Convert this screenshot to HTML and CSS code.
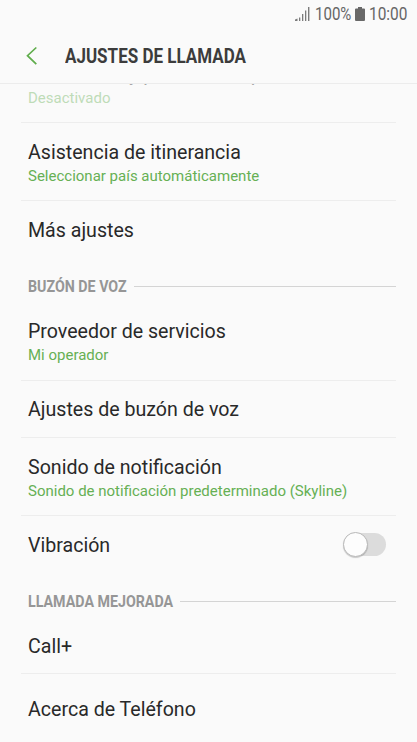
FILE: index.html
```
<!DOCTYPE html>
<html lang="es">
<head>
    <meta charset="UTF-8">
    <title>Ajustes de llamada</title>
    <link rel="stylesheet" href="styles.css">
</head>
<body>
    <div class="status">
        <svg class="signal" width="15" height="14" viewBox="0 0 15 14">
            <path d="M0 14v-1.500l2.500-1v2.500zM4 10.500h1.300V14H4zM7 7h1.300v7H7zM10 3.500h1.300V14H10zM13 0h1.400v14H13z" fill="#7b7b7b"/>
        </svg>
        <span class="percent"><span class="narrow">100%</span></span>
        <svg class="battery" width="10" height="14" viewBox="0 0 10 14">
            <path d="M3 0h4v1.500h2q1 0 1 1V13q0 1-1 1H1q-1 0-1-1V2.500q0-1 1-1h2z" fill="#686868"/>
        </svg>
        <span class="time"><span class="narrow">10:00</span></span>
    </div>
    <header class="header">
        <svg class="back" width="12" height="20" viewBox="0 0 12 20">
            <path d="M10.300 1.500L1.500 9.700l8.800 8.500" fill="none" stroke="#60ad4c" stroke-width="1.700"/>
        </svg>
        <h1 class="title">AJUSTES DE LLAMADA</h1>
    </header>
    <main class="list">
        <div class="row row-cut">
            <p class="name">Id. llamada y protección spam</p>
            <p class="sub">Desactivado</p>
        </div>
        <div class="row row-two">
            <p class="name">Asistencia de itinerancia</p>
            <p class="sub">Seleccionar país automáticamente</p>
        </div>
        <div class="row row-more">
            <p class="name">Más ajustes</p>
        </div>
        <div class="section">
            <h2 class="label label-voice"><span class="narrow">BUZÓN DE VOZ</span></h2>
            <i class="rule"></i>
        </div>
        <div class="row row-provider">
            <p class="name">Proveedor de servicios</p>
            <p class="sub">Mi operador</p>
        </div>
        <div class="row row-one">
            <p class="name">Ajustes de buzón de voz</p>
        </div>
        <div class="row row-two">
            <p class="name">Sonido de notificación</p>
            <p class="sub">Sonido de notificación predeterminado (Skyline)</p>
        </div>
        <div class="row row-switch">
            <p class="name">Vibración</p>
            <div class="switch"><span class="knob"></span></div>
        </div>
        <div class="section">
            <h2 class="label label-call"><span class="narrow">LLAMADA MEJORADA</span></h2>
            <i class="rule"></i>
        </div>
        <div class="row row-call">
            <p class="name">Call+</p>
        </div>
        <div class="row row-about">
            <p class="name">Acerca de Teléfono</p>
        </div>
    </main>
</body>
</html>
```
FILE: styles.css
```
*{margin:0;padding:0;box-sizing:border-box;}
body{
    width: 417px;
    height: 742px;
    overflow: hidden;
    background-color: #fafafa;
    color: #292929;
    font-family: Roboto, sans-serif;
}
svg{
    display: block;
}
.status{
    display: flex;
    align-items: center;
    height: 28px;
    padding-left: 295px;
    font-size: 17.500px;
    line-height: 28px;
    color: #666;
}
.narrow{
    display: inline-block;
    white-space: nowrap;
    transform: scaleX(0.88);
    transform-origin: 0 50%;
}
.percent{
    width: 36px;
    margin-left: 5px;
}
.percent .narrow{
    transform: scaleX(0.86);
}
.battery{
    margin-left: 4px;
}
.time{
    margin-left: 4px;
}
.header{
    display: flex;
    align-items: center;
    height: 56px;
    padding-left: 26px;
    border-bottom: 1px solid #ececec;
}
.title{
    margin-left: 27px;
    font-size: 20px;
    line-height: 24px;
    color: #3c3c3c;
    white-space: nowrap;
    transform: scaleX(0.85);
    transform-origin: 0 50%;
}
.list{
    height: 658px;
    padding: 0 21px;
    overflow: hidden;
}
.row{
    display: flex;
    flex-direction: column;
    padding-left: 7px;
    border-bottom: 1px solid #ededed;
}
.name{
    font-size: 19.600px;
    line-height: 24px;
    white-space: nowrap;
}
.sub{
    margin-top: 1px;
    font-size: 15px;
    line-height: 20px;
    color: #66b054;
    white-space: nowrap;
}
/* disabled row, half scrolled under the header */
.row-cut{
    height: 60px;
    margin-top: -21px;
}
.row-cut .name,
.row-cut .sub{
    opacity: 0.4;
}
.row-two{
    height: 78px;
    padding-top: 18px;
}
.row-one{
    height: 57px;
    padding-top: 17px;
}
.row-more{
    height: 69px;
    padding-top: 18px;
    border: none;
}
.section{
    display: flex;
    align-items: center;
    height: 32px;
    padding-left: 7px;
}
.label{
    padding-top: 2px;
    font-size: 16px;
    line-height: 20px;
    color: #969696;
}
.label-voice{
    width: 106px;
}
.label-call{
    width: 152px;
}
.label .narrow{
    transform: scaleX(0.89);
}
.rule{
    flex: 1;
    height: 1px;
    background-color: #d4d4d4;
}
.row-provider{
    height: 79px;
    padding-top: 18px;
}
.row-switch{
    flex-direction: row;
    justify-content: space-between;
    height: 69px;
    padding-top: 18px;
    padding-right: 10px;
    border: none;
}
.switch{
    width: 42px;
    height: 23px;
    margin-top: -1px;
    border-radius: 12px;
    background-color: #dcdcdc;
}
.knob{
    display: block;
    width: 25px;
    height: 25px;
    margin: -1px 0 0 -1px;
    border: 1px solid #b9b9b9;
    border-radius: 50%;
    background-color: #fdfdfd;
    box-shadow: 0 1px 1px rgba(0,0,0,0.2);
}
.row-call{
    height: 57px;
    padding-top: 18px;
}
.row-about{
    height: 69px;
    padding-top: 24px;
    border: none;
}
```
